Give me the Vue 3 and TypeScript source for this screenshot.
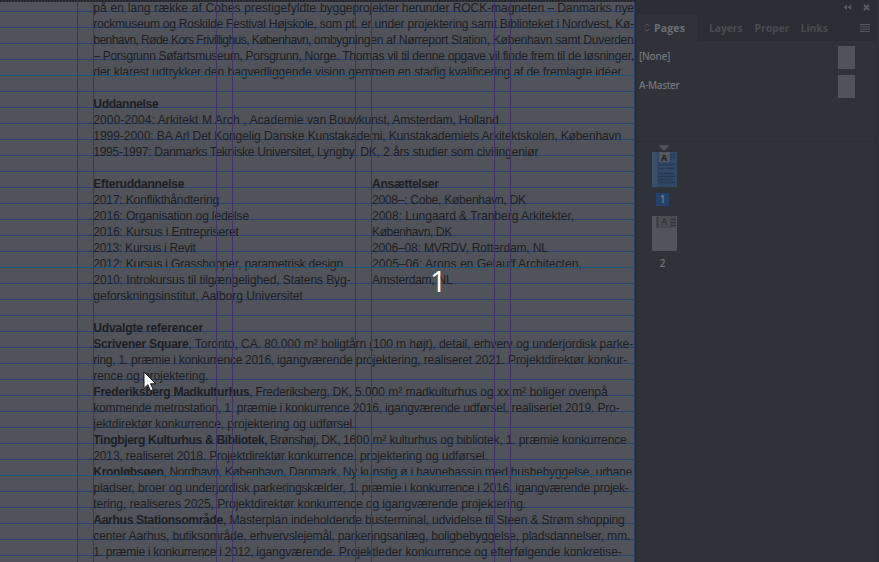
<script setup lang="ts">
import { nextTick, onMounted, ref } from 'vue'

// A run is a piece of a text line; `end` is its right edge on the page.
interface Run { text: string; width: number; bold: boolean; words: boolean }
type RunSpec = [text: string, end: number, style?: 'bold' | 'words']

function line(start: number, ...specs: RunSpec[]): Run[] {
  let x = start
  return specs.map(([text, end, style]) => {
    const width = end - x
    x = end
    return { text, width, bold: style === 'bold', words: style === 'words' }
  })
}
const L = 93.3
const R = 372

const intro: Run[][] = [
  line(L, ['på en lang række af Cobes prestigefyldte ', 320, 'words'], ['byggeprojekter herunder ROCK-magneten – Danmarks nye', 634]),
  line(L, ['rockmuseum og Roskilde Festival Højskole, ', 319.7], ['som pt. er under projektering samt Biblioteket i Nordvest, Kø-', 634]),
  line(L, ['benhavn, Røde Kors Frivillighus, København, ', 313.7], ['ombygningen af Nørreport Station, København samt Duverden', 633.5]),
  line(L, ['– Porsgrunn Søfartsmuseum, Porsgrunn, ', 304.5], ['Norge. Thomas vil til denne opgave vil finde frem til de løsninger,', 634]),
  line(L, ['der klarest udtrykker den bagvedliggende ', 315], ['vision gemmen en stadig kvalificering af de fremlagte idéer.', 624]),
  [],
  line(L, ['Uddannelse', 158.3, 'bold']),
  line(L, ['2000-2004: Arkitekt M Arch , Academie ', 307], ['van Bouwkunst, Amsterdam, Holland', 498.5]),
  line(L, ['1999-2000: BA Arl Det Kongelig Danske ', 307.7], ['Kunstakademi, Kunstakademiets Arkitektskolen, København', 621]),
  line(L, ['1995-1997: Danmarks Tekniske Universitet, ', 317], ['Lyngby, DK, 2 års studier som civilingeniør', 538.5]),
  [],
]
const education: Run[][] = [
  line(L, ['Efteruddannelse', 184.3, 'bold']),
  line(L, ['2017: Konflikthåndtering', 219]),
  line(L, ['2016: Organisation og ledelse', 249]),
  line(L, ['2016: Kursus i Entrepriseret', 238.7]),
  line(L, ['2013: Kursus i Revit', 195.5]),
  line(L, ['2012: Kursus i Grasshopper, parametrisk design', 343]),
  line(L, ['2010: Introkursus til tilgængelighed, Statens Byg-', 350.5]),
  line(L, ['geforskningsinstitut, Aalborg Universitet', 302.7]),
]
const employment: Run[][] = [
  line(R, ['Ansættelser', 438.7, 'bold']),
  line(R, ['2008–: Cobe, København, DK', 525.7]),
  line(R, ['2008: Lungaard & Tranberg Arkitekter,', 574]),
  line(R, ['København, DK', 451.8]),
  line(R, ['2006–08: MVRDV, Rotterdam, NL', 547.7]),
  line(R, ['2005–06: Arons en Gelauff Architecten,', 581.7]),
  line(R, ['Amsterdam, NL', 452.5]),
]
const references: Run[][] = [
  [],
  line(L, ['Udvalgte referencer', 203, 'bold']),
  line(L, ['Scrivener Square', 188.5, 'bold'], [', Toronto, CA. 80.000 m² ', 321], ['boligtårn (100 m højt), detail, erhverv og underjordisk parke-', 633]),
  line(L, ['ring, 1. præmie i konkurrence 2016, ', 277], ['igangværende projektering, realiseret 2021. Projektdirektør konkur-', 627]),
  line(L, ['rence og projektering.', 208.3]),
  line(L, ['Frederiksberg Madkulturhus', 249.3, 'bold'], [', Frederiksberg, DK, ', 355], ['5.000 m² madkulturhus og xx m² boliger ovenpå', 607.7]),
  line(L, ['kommende metrostation, 1. præmie ', 279.5], ['i konkurrence 2016, igangværende udførsel, realiseriet 2019. Pro-', 619.5]),
  line(L, ['jektdirektør konkurrence, projektering og udførsel.', 355.5]),
  line(L, ['Tingbjerg Kulturhus & Bibliotek', 264.3, 'bold'], [', Brønshøj, DK, ', 343], ['1600 m² kulturhus og bibliotek, 1. præmie konkurrence', 626.7]),
  line(L, ['2013, realiseret 2018. Projektdirektør ', 288], ['konkurrence, projektering og udførsel.', 488]),
  line(L, ['Kronløbsøen', 163.5, 'bold'], [', Nordhavn, København, ', 289], ['Danmark, Ny kunstig ø i havnebassin med husbebyggelse, urbane', 632]),
  line(L, ['pladser, broer og underjordisk ', 253], ['parkeringskælder, 1. præmie i konkurrence i 2016, igangværende projek-', 628.7]),
  line(L, ['tering, realiseres 2025, Projektdirektør ', 297.5], ['konkurrence og igangværende projektering.', 526]),
  line(L, ['Aarhus Stationsområde', 223, 'bold'], [', Masterplan ', 291], ['indeholdende busterminal, udvidelse til Steen & Strøm shopping', 624.7]),
  line(L, ['center Aarhus, butiksområde, ', 249.7], ['erhvervslejemål, parkeringsanlæg, boligbebyggelse, pladsdannelser, mm.', 630]),
  line(L, ['1. præmie i konkurrence i 2012, ', 256.3], ['igangværende. Projektleder konkurrence og efterfølgende konkretise-', 621.7]),
]

const columns = [77, 93, 216, 232, 355, 371, 494, 510]
const masters = ['[None]', 'A-Master']
const root = ref<HTMLElement | null>(null)

// Tracks each run so that it fills its measured width.
function fit() {
  root.value?.querySelectorAll<HTMLElement>('.run').forEach((el) => {
    const inner = el.firstElementChild as HTMLElement
    const text = inner.textContent ?? ''
    const spare = parseFloat(el.style.width) - inner.getBoundingClientRect().width
    if (el.dataset.words === 'true') inner.style.wordSpacing = `${spare / (text.split(' ').length - 1)}px`
    else inner.style.letterSpacing = `${spare / text.length}px`
  })
}
onMounted(async () => {
  await nextTick()
  fit()
})
</script>

<template>
  <div ref="root" class="app">
    <main class="page">
      <section v-for="(block, b) in [intro, education, employment, references]" :key="b" :class="['story', 'story-' + b]">
        <div v-for="(row, i) in block" :key="i" class="row">
          <span v-for="(run, j) in row" :key="j" class="run" :class="{ bold: run.bold }" :data-words="run.words" :style="{ width: run.width + 'px' }"><span>{{ run.text }}</span></span>
        </div>
      </section>
      <i v-for="y in [75, 267, 475]" :key="y" class="seam" :style="{ top: y + 'px' }"></i>
      <i v-for="x in columns" :key="x" class="guide" :style="{ left: x + 'px' }"></i>
      <i class="frame"></i>
      <div class="top-rule"></div>
    </main>

    <aside class="panel">
      <header class="bar">
        <svg width="9" height="7" viewBox="0 0 9 7"><path d="M4 0.5V6L0.5 3.2ZM8.2 0.5V6L4.8 3.2Z" fill="#5b5e64" /></svg>
        <svg width="7" height="7" viewBox="0 0 7 7"><path d="M1 1L6 6M6 1L1 6" stroke="#5b5e64" stroke-width="1.8" /></svg>
      </header>
      <nav class="tabs">
        <div class="tab active">
          <svg width="6" height="9" viewBox="0 0 6 9"><path d="M0.7 3.3L3 0.8L5.3 3.3M0.7 5.7L3 8.2L5.3 5.7" fill="none" stroke="#51545a" stroke-width="1" /></svg>
          <span class="run" :style="{ width: '31px' }"><span>Pages</span></span>
        </div>
        <div class="tab layers"><span class="run" :style="{ width: '33.5px' }"><span>Layers</span></span></div>
        <div class="tab proper"><span class="run" :style="{ width: '35px' }"><span>Proper</span></span></div>
        <div class="tab links"><span class="run" :style="{ width: '27.5px' }"><span>Links</span></span></div>
        <svg class="menu" width="10" height="8" viewBox="0 0 10 8"><path d="M0 .5H10M0 2.8H10M0 5.1H10M0 7.4H10" stroke="#565960" stroke-width="1" /></svg>
      </nav>
      <div class="masters">
        <div v-for="(name, i) in masters" :key="name" class="master">
          <span class="run" :style="{ width: [31, 40.3][i] + 'px' }"><span>{{ name }}</span></span>
          <div class="sheet"></div>
        </div>
      </div>
      <div class="pages">
        <svg width="12" height="6" viewBox="0 0 12 6"><path d="M0 0H12L6 6Z" fill="#4d5056" /></svg>
        <div class="thumb selected">
          <svg width="25" height="35" viewBox="0 0 25 35">
            <rect width="25" height="35" fill="#314966" />
            <rect width="5" height="35" fill="#3d4f68" />
            <path d="M6 12.5H23M6 16.5H13M15 16.5H23M6 21.5H22M6 24.5H23M6 27.5H21M6 30.5H23" stroke="#283b56" stroke-width="1.6" />
            <path d="M19 2V8M22 1V7" stroke="#283b56" stroke-width="1.4" />
          </svg>
          <b>A</b>
        </div>
        <div class="number on">1</div>
        <div class="thumb second">
          <svg width="25" height="35" viewBox="0 0 25 35">
            <rect width="25" height="35" fill="#51545b" />
            <rect x="5" y="0" width="19" height="12" fill="#44474e" />
            <path d="M19 3.5H24M19 6.5H24M19 9.5H24M5 1V12" stroke="#30333a" stroke-width="1" />
          </svg>
          <b>A</b>
        </div>
        <div class="number">2</div>
      </div>
    </aside>

    <div class="counter">1</div>
    <svg class="cursor" width="15" height="22" viewBox="0 0 15 22"><path d="M1 1V17.3L4.9 13.7L7.5 19.8L10.2 18.6L7.6 12.8H12.8Z" fill="#fff" stroke="#16181c" stroke-width="1" /></svg>
  </div>
</template>

<style>
body { background: #2f3239; overflow: hidden; }
</style>

<style scoped>
.app { position: relative; display: flex; width: 879px; height: 562px; overflow: hidden; background: #2f3239; }
.page {
  position: relative; width: 635px; height: 562px; flex: none; overflow: hidden;
  display: grid; grid-template-columns: 371px 264px; grid-template-rows: 176px 128px 256px;
  background: #505359 linear-gradient(to bottom, transparent 11px, #2a4272 11px, #2a4272 12px, transparent 12px) 0 0 / 100% 16px;
  color: #1c1f25; font: 12.1px/16px "Liberation Sans", Arial, sans-serif;
}
.story { padding-left: 93.3px; }
.story-0, .story-3 { grid-column: 1 / 3; }
.story-2 { padding-left: 1px; }
.row { display: flex; height: 16px; white-space: pre; }
.run { display: block; flex: none; white-space: pre; }
.run > span { display: inline-block; }
.bold { font-weight: 700; }
.seam { position: absolute; left: 0; width: 635px; height: 1px; background: #22557a; }
.guide { position: absolute; top: 0; bottom: 0; width: 1px; background: #3f3364; }
.frame { position: absolute; left: 634px; top: 0; bottom: 0; width: 1px; background: #2e3e62; }
.top-rule { position: absolute; left: 0; right: 0; top: 0; height: 2px; background: repeating-linear-gradient(to right, #25282e 0 2px, #34373e 2px 3px); }

.panel { width: 242px; height: 562px; display: flex; flex-direction: column; box-sizing: border-box; border-left: 1px solid #272344; border-right: 1px solid #292c33; color: #74777d; font: 500 10px/14px "Noto Sans", "Open Sans", sans-serif; }
.bar { height: 14px; box-sizing: border-box; padding: 4px 6px 0 0; display: flex; justify-content: flex-end; gap: 11px; background: #2a2d34; }
.tabs { height: 27px; display: flex; align-items: center; background: #2a2d34; color: #484b51; font: 700 10.5px/14px "Open Sans", "Noto Sans", sans-serif; }
.tab { height: 27px; display: flex; align-items: center; }
.active { width: 61px; box-sizing: border-box; padding-left: 8px; gap: 4px; background: #2f3239; color: #6c6f75; }
.layers { margin-left: 12px; }
.proper { margin-left: 12px; }
.links { margin-left: 11px; }
.menu { margin-left: auto; margin-right: 6px; }
.masters { height: 101px; box-sizing: border-box; padding-top: 5px; border-bottom: 1px solid #2c2f36; }
.master { height: 29px; display: flex; justify-content: space-between; padding: 0 21px 0 3px; }
.master .run { padding-top: 3px; }
.sheet { width: 17px; height: 23px; background: #50535a; }
.pages { width: 60px; display: flex; flex-direction: column; align-items: center; padding-top: 3px; margin-left: -2px; }
.pages > svg { flex: none; }
.thumb { position: relative; width: 25px; height: 35px; }
.thumb svg { display: block; }
.thumb b { position: absolute; left: 7px; top: 0; width: 11px; height: 10px; background: #54575d; color: #1d2025; font: 700 9px/11px "Open Sans", sans-serif; text-align: center; }
.thumb.second b { background: #4a4d53; color: #292c32; font-weight: 400; }
.number { height: 13px; width: 13px; margin: 6px 3px 10px 0; text-align: center; line-height: 13px; }
.selected { margin-top: 1px; }
.on { background: #26406c; color: #7a7f88; }

.counter { position: absolute; left: 430px; top: 261px; color: #fff; font: 29px/40px "Open Sans", sans-serif; }
.cursor { position: absolute; left: 143px; top: 371px; }
</style>
